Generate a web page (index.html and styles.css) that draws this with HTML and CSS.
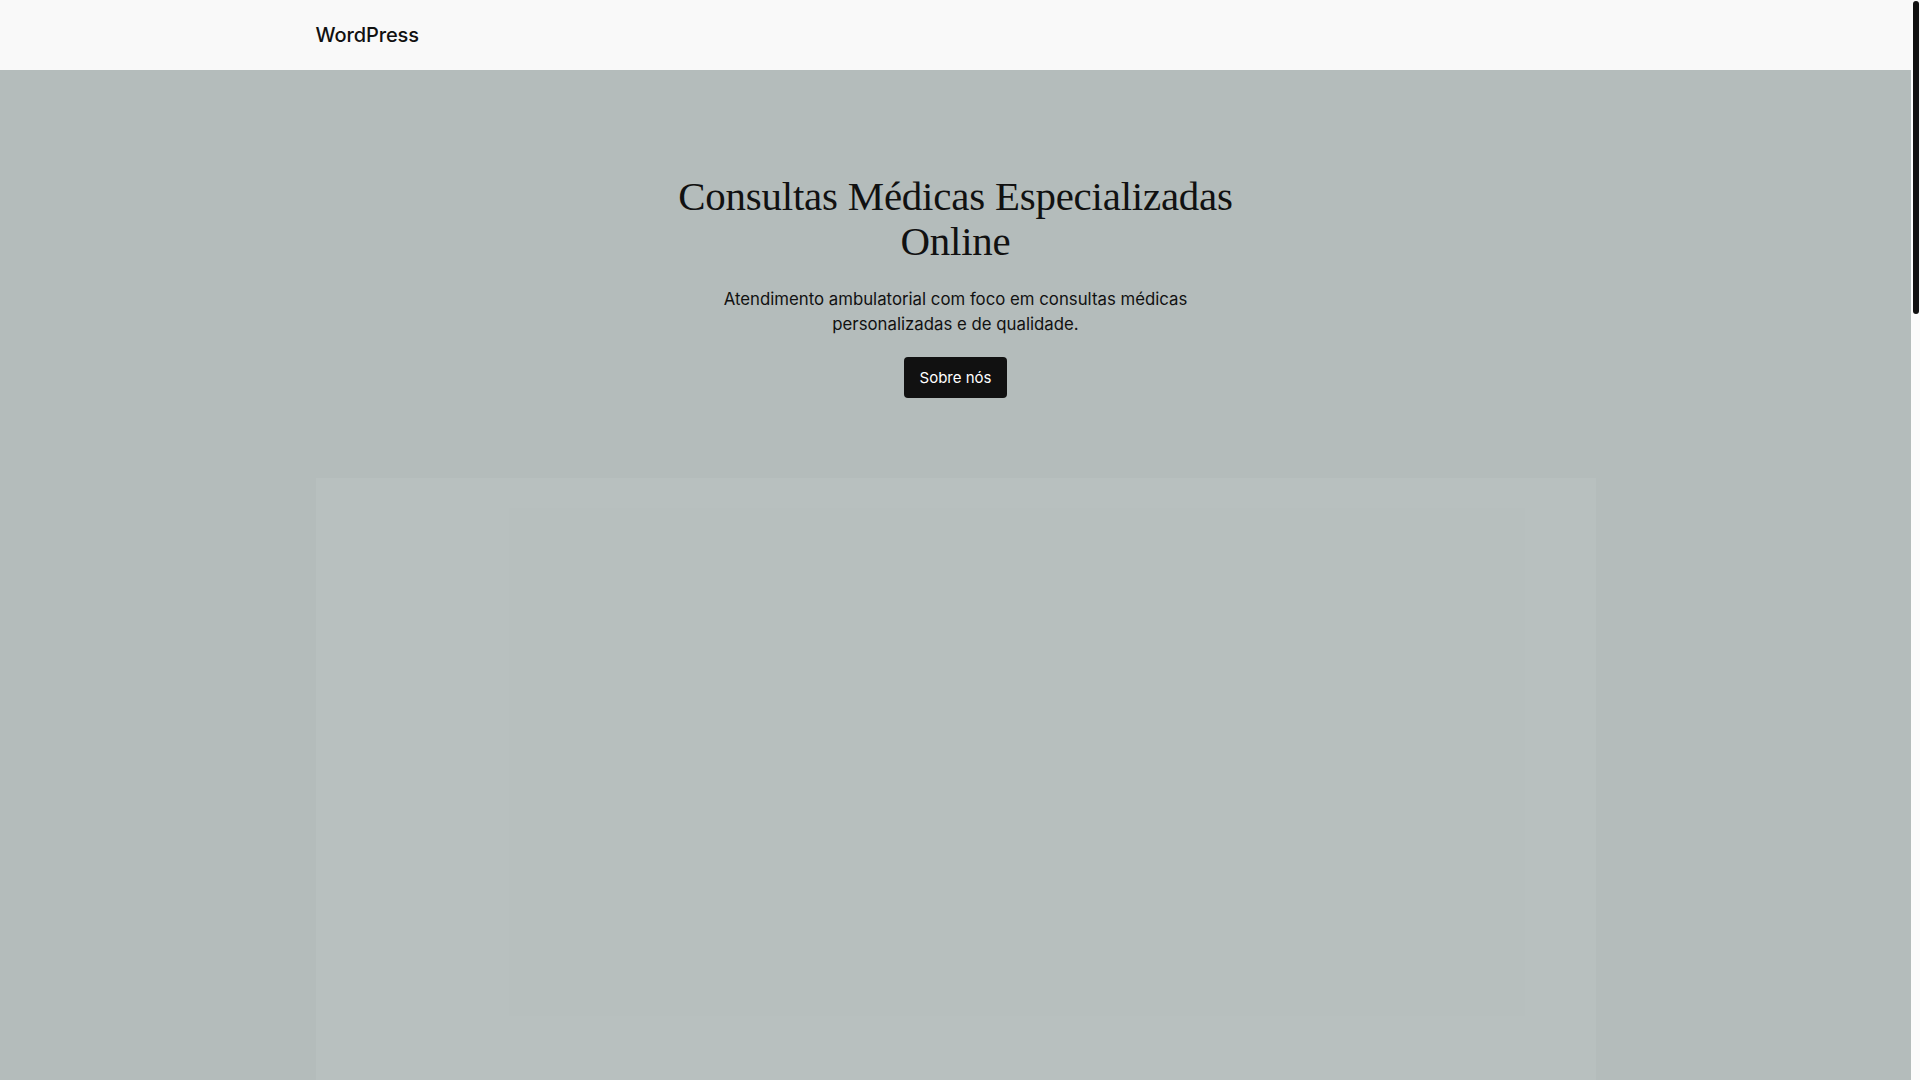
FILE: index.html
```html
<!DOCTYPE html>
<html lang="pt-BR">
<head>
    <meta charset="UTF-8">
    <meta name="viewport" content="width=device-width, initial-scale=1.0">
    <title>WordPress</title>
    <link rel="stylesheet" href="styles.css">
</head>
<body>
    <!-- 页头 -->
    <header class="site-header">
        <div class="header-inner">
            <a class="site-title" href="#">WordPress</a>
        </div>
    </header>

    <main class="site-main">
        <!-- 首屏 -->
        <section class="hero">
            <h1 class="hero-title">Consultas Médicas Especializadas Online</h1>
            <p class="hero-text">Atendimento ambulatorial com foco em consultas médicas personalizadas e de qualidade.</p>
            <a class="button" href="#">Sobre nós</a>
        </section>

        <!-- 图片占位 -->
        <div class="hero-image">
            <div class="hero-image-inner"></div>
        </div>
    </main>

    <!-- 滚动条 -->
    <div class="scrollbar"><div class="scrollbar-thumb"></div></div>
</body>
</html>
```

FILE: styles.css
```css
/* 全局 */
html {
    background-color: #f9f9f9;
}

body {
    margin: 0 9px 0 0;
    font-family: Inter, "Noto Sans", sans-serif;
    color: #111111;
    background-color: #b4bcbb;
}

/* 滚动条 */
.scrollbar {
    position: fixed;
    top: 0;
    right: 0;
    width: 9px;
    height: 100vh;
    background-color: #fbfbfb;
}

.scrollbar-thumb {
    width: 6px;
    height: 313px;
    margin: 1px 0 0 2px;
    border-radius: 3px;
    background-color: #111111;
}

/* 页头 */
.site-header {
    background-color: #f9f9f9;
    height: 70px;
}

.header-inner {
    max-width: 1280px;
    height: 100%;
    margin: 0 auto;
    display: flex;
    align-items: center;
}

.site-title {
    font-size: 20px;
    font-weight: 500;
    color: #111111;
    text-decoration: none;
    letter-spacing: -0.1px;
}

/* 首屏 */
.site-main {
    padding-bottom: 1400px;
}

.hero {
    display: flex;
    flex-direction: column;
    align-items: center;
    text-align: center;
    padding-top: 104px;
}

.hero-title {
    max-width: 620px;
    margin: 0;
    font-family: "Liberation Serif", "DejaVu Serif", serif;
    font-size: 40.9px;
    font-weight: 400;
    line-height: 1.11;
    letter-spacing: -0.2px;
}

.hero-text {
    max-width: 480px;
    margin: 22px 0 0;
    font-size: 16.8px;
    line-height: 1.53;
}

.button {
    margin-top: 19px;
    padding: 11.5px 16px;
    background-color: #111111;
    color: #ffffff;
    border-radius: 4px;
    font-size: 15px;
    line-height: 1.2;
    text-decoration: none;
}

/* 图片占位 */
.hero-image {
    max-width: 1280px;
    height: 1300px;
    margin: 80px auto 0;
    padding-top: 30px;
    box-sizing: border-box;
    background-color: #b8c0bf;
}

.hero-image-inner {
    width: 1016px;
    height: 508px;
    margin-left: 193px;
    background-color: #b7bfbe;
}
```
